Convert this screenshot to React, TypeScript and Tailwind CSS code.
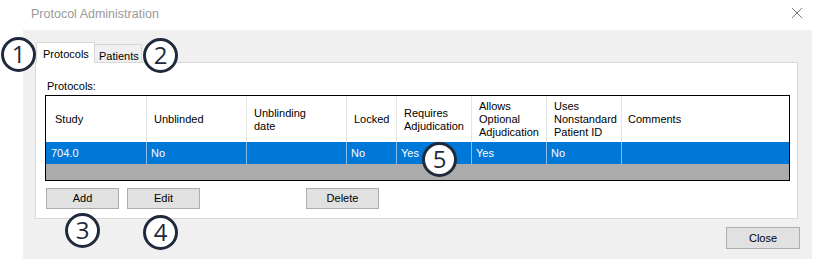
import React from "react";

type Col = { title: string[]; width: string; value: string; hpad: string };

const columns: Col[] = [
  { title: ["Study"], width: "w-[101px]", value: "704.0", hpad: "pl-[9px]" },
  { title: ["Unblinded"], width: "w-[100px]", value: "No", hpad: "pl-[7px]" },
  { title: ["Unblinding", "date"], width: "w-[100px]", value: "", hpad: "pl-[7px]" },
  { title: ["Locked"], width: "w-[50px]", value: "No", hpad: "pl-[7px]" },
  { title: ["Requires", "Adjudication"], width: "w-[75px]", value: "Yes", hpad: "pl-[7px]" },
  { title: ["Allows", "Optional", "Adjudication"], width: "w-[75px]", value: "Yes", hpad: "pl-[7px]" },
  { title: ["Uses", "Nonstandard", "Patient ID"], width: "w-[75px]", value: "No", hpad: "pl-[7px]" },
];

function Marker({ n, className }: { n: number; className: string }) {
  return (
    <div
      className={`absolute w-[35px] h-[35px] rounded-full border-[3px] border-[#1f2b3c] bg-white flex items-center justify-center text-[#1f2b3c] text-[24px] leading-none font-['Open_Sans',sans-serif] ${className}`}
    >
      <span className="-mt-[1px]">{n}</span>
    </div>
  );
}

function WinButton({ label, className = "" }: { label: string; className?: string }) {
  return (
    <button className={`h-[21px] w-[73px] border border-[#adadad] bg-[#e1e1e1] text-[11px] text-black flex items-center justify-center ${className}`}>
      {label}
    </button>
  );
}

export default function App() {
  return (
    <div className="relative w-[813px] h-[270px] bg-white overflow-hidden font-['Liberation_Sans',Arial,sans-serif] text-[11px] text-black">
      {/* title bar */}
      <div className="h-[30px] flex items-center justify-between pl-[31px] pr-[10px]">
        <span className="text-[12.5px] text-[#9a9a9a] -mt-[2px]">Protocol Administration</span>
        <svg width="12" height="12" viewBox="0 0 12 12" className="-mt-[4px]">
          <path d="M1 1 L11 11 M11 1 L1 11" stroke="#7a7a7a" strokeWidth="1" fill="none" />
        </svg>
      </div>

      {/* body */}
      <div className="ml-[23px] w-[789px] h-[229px] bg-[#f0f0f0] pt-[12px] pl-[12px] pr-[14px] flex flex-col">
        {/* tabs */}
        <div className="h-[20px] flex items-end pl-[1px]">
          <div className="relative z-10 h-[21px] -mb-[1px] w-[59px] border border-b-0 border-[#d9d9d9] bg-white flex items-start pl-[6px] pt-[3px]">
            Protocols
          </div>
          <div className="h-[18px] w-[47px] border border-b-0 border-l-0 border-[#d9d9d9] bg-[#f0f0f0] flex items-start pl-[4px] pt-[3px]">
            Patients
          </div>
        </div>

        {/* tab panel */}
        <div className="h-[157px] border border-[#d9d9d9] bg-white pt-[17px] pl-[9px] flex flex-col">
          <div className="h-[13px] leading-[13px] pl-[2px]">Protocols:</div>
          <div className="mt-[2px] w-[745px] h-[86px] border border-black flex flex-col">
            {/* header */}
            <div className="h-[46px] flex bg-white">
              {columns.map((c) => (
                <div key={c.title.join(" ")} className={`${c.width} shrink-0 border-r border-[#e5e5e5] flex flex-col justify-center leading-[13px] pt-[1px] ${c.hpad}`}>
                  {c.title.map((t) => (
                    <span key={t}>{t}</span>
                  ))}
                </div>
              ))}
              <div className="flex-1 flex flex-col justify-center leading-[13px] pt-[1px] pl-[6px]">Comments</div>
            </div>
            {/* selected row */}
            <div className="h-[22px] flex bg-[#0078d7] text-white">
              {columns.map((c, i) => (
                <div key={c.title.join(" ")} className={`${c.width} shrink-0 border-r border-[#8cbde8] flex items-center ${i === 0 ? "pl-[5px]" : "pl-[4px]"} pt-[1px]`}>
                  {c.value}
                </div>
              ))}
              <div className="flex-1" />
            </div>
            <div className="flex-1 bg-[#ababab]" />
          </div>

          {/* buttons */}
          <div className="mt-[7px] flex pl-[1px]">
            <WinButton label="Add" />
            <WinButton label="Edit" className="ml-[8px]" />
            <WinButton label="Delete" className="ml-[106px]" />
          </div>
        </div>

        <div className="flex justify-end mt-[8px] -mr-[2px]">
          <WinButton label="Close" className="w-[74px] h-[22px]" />
        </div>
      </div>

      {/* annotation markers */}
      <Marker n={1} className="left-[1px] top-[37px]" />
      <Marker n={2} className="left-[143px] top-[38px]" />
      <Marker n={3} className="left-[65px] top-[213px]" />
      <Marker n={4} className="left-[143px] top-[215px]" />
      <Marker n={5} className="left-[422px] top-[142px]" />
    </div>
  );
}
